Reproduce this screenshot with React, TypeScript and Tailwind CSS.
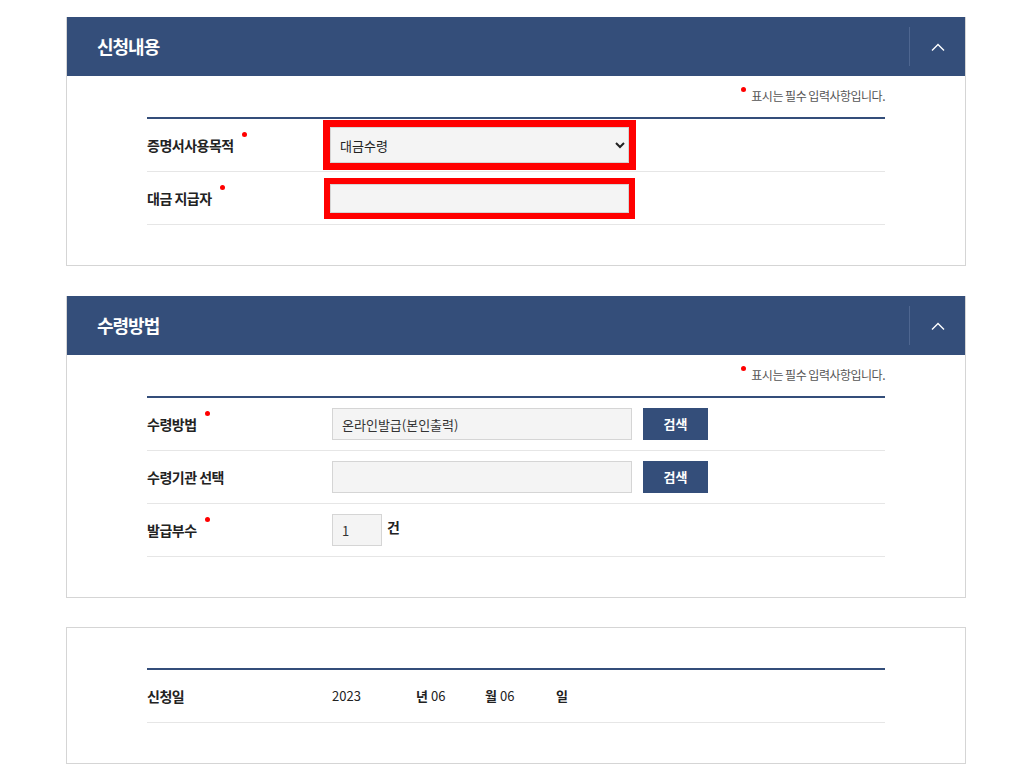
import type { ReactNode } from "react";

const font = { fontFamily: '"Noto Sans CJK KR", "Noto Sans", sans-serif' };

function Dot() {
  return (
    <span className="relative -top-[14px] ml-[8px] inline-block h-[5px] w-[5px] rounded-full bg-[#f00]" />
  );
}

function Note() {
  return (
    <div className="flex h-[20px] items-center justify-end text-[12px] tracking-[-0.5px] text-[#555]">
      <span className="relative -top-[7px] mr-[5px] inline-block h-[5px] w-[5px] rounded-full bg-[#f00]" />
      표시는 필수 입력사항입니다.
    </div>
  );
}

function Row({ label, required, children }: { label: string; required?: boolean; children?: ReactNode }) {
  return (
    <div className="flex h-[53px] items-center border-b border-[#e6e6e6]">
      <div className="w-[185px] shrink-0 text-[14px] font-bold tracking-[-0.5px] text-[#222]">
        {label}
        {required && <Dot />}
      </div>
      <div className="flex flex-1 items-center">{children}</div>
    </div>
  );
}

function Header({ title }: { title: string }) {
  return (
    <div className="flex h-[59px] items-center bg-[#344e7a] pl-[30px]">
      <h2 className="flex-1 text-[18px] font-bold tracking-[-1px] text-white">{title}</h2>
      <div className="h-[39px] w-px bg-[#4e6690]" />
      <button type="button" className="flex h-[59px] w-[55px] items-center justify-center">
        <svg width="14" height="8" viewBox="0 0 14 8" fill="none">
          <path d="M1 7.5 L7 1.5 L13 7.5" stroke="white" strokeWidth="1.4" />
        </svg>
      </button>
    </div>
  );
}

function SearchBtn() {
  return (
    <button
      type="button"
      className="ml-[11px] h-[32px] w-[65px] bg-[#344e7a] text-[13px] font-bold text-white"
    >
      검색
    </button>
  );
}

export default function App() {
  return (
    <div className="min-h-[782px] bg-white pt-[17px]" style={font}>
      <div className="ml-[66px] w-[900px]">
        <section className="border border-t-0 border-[#d5d5d5]">
          <Header title="신청내용" />
          <div className="px-[80px] pb-[40px] pt-[10px]">
            <Note />
            <div className="mt-[11px] border-t-2 border-[#344e7a]">
              <Row label="증명서사용목적" required>
                <div className="ml-[-9px] border-[7px] border-[#f00]">
                  <select className="h-[36px] w-[299px] border border-[#d5d5d5] bg-[#f4f4f4] px-[5px] text-[13px] text-[#222]">
                    <option>대금수령</option>
                  </select>
                </div>
              </Row>
              <Row label="대금 지급자" required>
                <div className="ml-[-8px] border-[6px] border-[#f00]">
                  <input className="block h-[29px] w-[299px] border border-[#d5d5d5] bg-[#f4f4f4]" />
                </div>
              </Row>
            </div>
          </div>
        </section>

        <section className="mt-[30px] border border-t-0 border-[#d5d5d5]">
          <Header title="수령방법" />
          <div className="px-[80px] pb-[40px] pt-[10px]">
            <Note />
            <div className="mt-[11px] border-t-2 border-[#344e7a]">
              <Row label="수령방법" required>
                <input
                  readOnly
                  value="온라인발급(본인출력)"
                  className="h-[32px] w-[300px] border border-[#d5d5d5] bg-[#f4f4f4] px-[9px] text-[13px] text-[#333]"
                />
                <SearchBtn />
              </Row>
              <Row label="수령기관 선택">
                <input className="h-[32px] w-[300px] border border-[#d5d5d5] bg-[#f4f4f4]" />
                <SearchBtn />
              </Row>
              <Row label="발급부수" required>
                <input
                  readOnly
                  value="1"
                  className="h-[32px] w-[50px] border border-[#d5d5d5] bg-[#f4f4f4] px-[9px] text-[13px] text-[#333]"
                />
                <span className="relative -top-[3px] ml-[5px] text-[14px] font-bold text-[#222]">건</span>
              </Row>
            </div>
          </div>
        </section>

        <section className="mt-[29px] border border-[#d5d5d5]">
          <div className="px-[80px] pb-[40px] pt-[40px]">
            <div className="border-t-2 border-[#344e7a]">
              <Row label="신청일">
                <div className="flex items-center text-[13px] text-[#222]">
                  <span className="w-[84px]">2023</span>
                  <span className="font-bold">년</span>
                  <span className="ml-[3px] w-[54px]">06</span>
                  <span className="font-bold">월</span>
                  <span className="ml-[3px] w-[56px]">06</span>
                  <span className="font-bold">일</span>
                </div>
              </Row>
            </div>
          </div>
        </section>
      </div>
    </div>
  );
}
